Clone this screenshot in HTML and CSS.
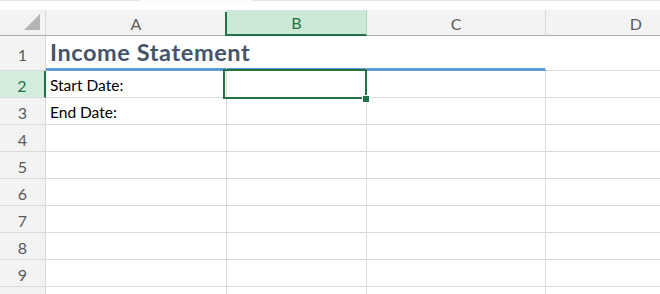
FILE: index.html
```html
<!DOCTYPE html>
<html>
<head>
<meta charset="utf-8">
<link rel="stylesheet" href="styles.css">
</head>
<body>
<div class="topline"></div>
<div class="sheet">
  <div class="hd corner"><span class="tri"></span></div>
  <div class="hd col">A</div>
  <div class="hd col sel">B</div>
  <div class="hd col">C</div>
  <div class="hd col">D</div>

  <div class="hd row">1</div>
  <div class="c title t-span">Income Statement</div>
  <div class="c title"></div>
  <div class="c title"></div>
  <div class="c r1"></div>

  <div class="hd row sel">2</div>
  <div class="c txt">Start Date:</div>
  <div class="c active"><span class="outline"></span><span class="handle"></span></div>
  <div class="c"></div>
  <div class="c"></div>

  <div class="hd row">3</div>
  <div class="c txt">End Date:</div>
  <div class="c"></div><div class="c"></div><div class="c"></div>

  <div class="hd row">4</div>
  <div class="c"></div><div class="c"></div><div class="c"></div><div class="c"></div>
  <div class="hd row">5</div>
  <div class="c"></div><div class="c"></div><div class="c"></div><div class="c"></div>
  <div class="hd row">6</div>
  <div class="c"></div><div class="c"></div><div class="c"></div><div class="c"></div>
  <div class="hd row">7</div>
  <div class="c"></div><div class="c"></div><div class="c"></div><div class="c"></div>
  <div class="hd row">8</div>
  <div class="c"></div><div class="c"></div><div class="c"></div><div class="c"></div>
  <div class="hd row">9</div>
  <div class="c"></div><div class="c"></div><div class="c"></div><div class="c"></div>
  <div class="hd row"></div>
  <div class="c"></div><div class="c"></div><div class="c"></div><div class="c"></div>
</div>
</body>
</html>
```
FILE: styles.css
```css
html, body {
  margin: 0;
  padding: 0;
  background: #fff;
  overflow: hidden;
  width: 660px;
  height: 294px;
}
body {
  font-family: Lato, "Open Sans", sans-serif;
}
.topline {
  height: 1px;
  margin-bottom: 9px;
  background: linear-gradient(to right, #e4e4e4 0 140px, #fafafa 140px 252px, #e4e4e4 252px);
}
.sheet {
  display: grid;
  grid-template-columns: 46px 181px 140px 179px 114px;
  grid-template-rows: 26px 35px repeat(8, 27px) 8px;
  overflow: hidden;
}
.sheet > div {
  box-sizing: border-box;
  border-right: 1px solid #d9d9d9;
  border-bottom: 1px solid #d9d9d9;
}
.hd {
  background: #f3f3f3;
  color: #5a5a5a;
  font-size: 16px;
  display: flex;
  align-items: center;
  justify-content: center;
}
.sheet > .col, .sheet > .corner {
  border-bottom: 1px solid #ababab;
  padding-top: 1px;
}
.sheet > .col:last-child, .sheet > div:nth-child(5n) {
  border-right: none;
}
.sheet > .col:nth-child(5) {
  justify-content: flex-end;
  padding-right: 18px;
}
.corner {
  position: relative;
}
.tri {
  position: absolute;
  left: 24px;
  top: 4px;
  width: 0;
  height: 0;
  border-left: 16px solid transparent;
  border-bottom: 16px solid #b4b4b4;
}
.sheet > .col.sel {
  background: #cce8d6;
  color: #217346;
  border-bottom: 2px solid #217346;
  border-right: 1px solid #a9d7b9;
  box-shadow: -3px 1px 0 -1px #217346;
}
.row {
  padding-top: 2px;
}
.sheet > .row.sel {
  background: #d3ecdc;
  color: #217346;
  border-right: 2px solid #217346;
}
.c {
  position: relative;
  display: flex;
  align-items: flex-end;
  white-space: nowrap;
  overflow: visible;
  color: #000;
}
.sheet > .title {
  border-bottom: 3px solid #5b9bd5;
  border-right-color: transparent;
}
.t-span {
  font-weight: 700;
  color: #44546a;
  font-size: 23.5px;
  letter-spacing: 0.6px;
  padding: 0 0 2px 4px;
  z-index: 1;
}
.txt {
  font-size: 15.5px;
  padding: 0 0 3px 4px;
}
.outline {
  position: absolute;
  left: -4px;
  top: -2px;
  width: 144px;
  height: 30px;
  box-sizing: border-box;
  border: 2px solid #217346;
  z-index: 2;
}
.handle {
  position: absolute;
  left: 135px;
  top: 24px;
  width: 6px;
  height: 6px;
  background: #217346;
  border: 1px solid #fff;
  z-index: 3;
}
```
